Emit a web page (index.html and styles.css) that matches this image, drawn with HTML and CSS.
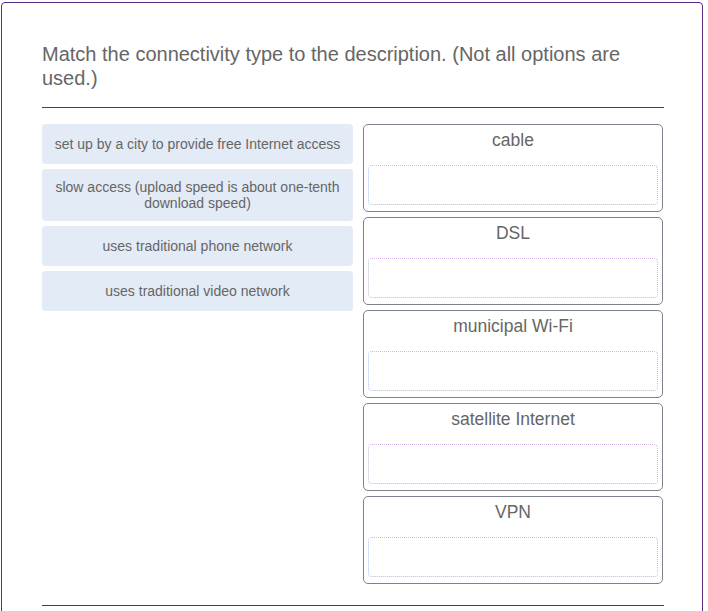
FILE: index.html
```html
<!DOCTYPE html>
<html>
<head>
<meta charset="utf-8">
<link rel="stylesheet" href="styles.css">
</head>
<body>
<div class="card">
  <h1 class="question">Match the connectivity type to the description. (Not all options are used.)</h1>
  <hr class="rule">
  <div class="match">
    <div class="options">
      <div class="option">set up by a city to provide free Internet access</div>
      <div class="option">slow access (upload speed is about one-tenth download speed)</div>
      <div class="option">uses traditional phone network</div>
      <div class="option">uses traditional video network</div>
    </div>
    <div class="targets">
      <div class="target"><div class="target-title">cable</div><div class="drop"></div></div>
      <div class="target"><div class="target-title">DSL</div><div class="drop"></div></div>
      <div class="target"><div class="target-title">municipal Wi-Fi</div><div class="drop"></div></div>
      <div class="target"><div class="target-title">satellite Internet</div><div class="drop"></div></div>
      <div class="target"><div class="target-title">VPN</div><div class="drop"></div></div>
    </div>
  </div>
  <hr class="rule bottom">
</div>
</body>
</html>
```
FILE: styles.css
```css
html, body {
  margin: 0;
  padding: 0;
  background: #ffffff;
  font-family: "Liberation Sans", Arial, sans-serif;
}
.card {
  margin: 2px 0 0 1px;
  width: 702px;
  border: 1px solid #5e2a84;
  border-radius: 4px;
  padding: 39px 38px 40px 40px;
  box-sizing: border-box;
}
.question {
  margin: 0;
  font-size: 20px;
  font-weight: normal;
  line-height: 24px;
  color: #666666;
}
.rule {
  margin: 17px 0 0 0;
  border: 0;
  height: 1px;
  background: #5e2a84;
}
.rule.bottom {
  margin-top: 21px;
}
.match {
  margin-top: 16px;
  display: flex;
  gap: 10px;
  align-items: flex-start;
}
.options {
  width: 311px;
  flex: none;
  display: flex;
  flex-direction: column;
  gap: 5px;
}
.option {
  min-height: 40px;
  box-sizing: border-box;
  padding: 10px;
  background: #e3ebf6;
  border-radius: 4px;
  display: flex;
  align-items: center;
  justify-content: center;
  text-align: center;
  font-size: 14px;
  line-height: 16px;
  color: #666666;
}
.targets {
  width: 300px;
  flex: none;
  display: flex;
  flex-direction: column;
  gap: 5px;
}
.target {
  height: 88px;
  box-sizing: border-box;
  border: 1px solid #7d818b;
  border-radius: 5px;
  padding: 4px 4px 6px 4px;
  display: flex;
  flex-direction: column;
}
.target-title {
  text-align: center;
  font-size: 17.5px;
  line-height: 22px;
  color: #666666;
  height: 36px;
}
.drop {
  flex: 1;
  border: 1px dotted #a9c1e3;
  border-top-color: #d9b2ee;
  border-right-color: #d9b2ee;
  border-radius: 4px;
}
```
